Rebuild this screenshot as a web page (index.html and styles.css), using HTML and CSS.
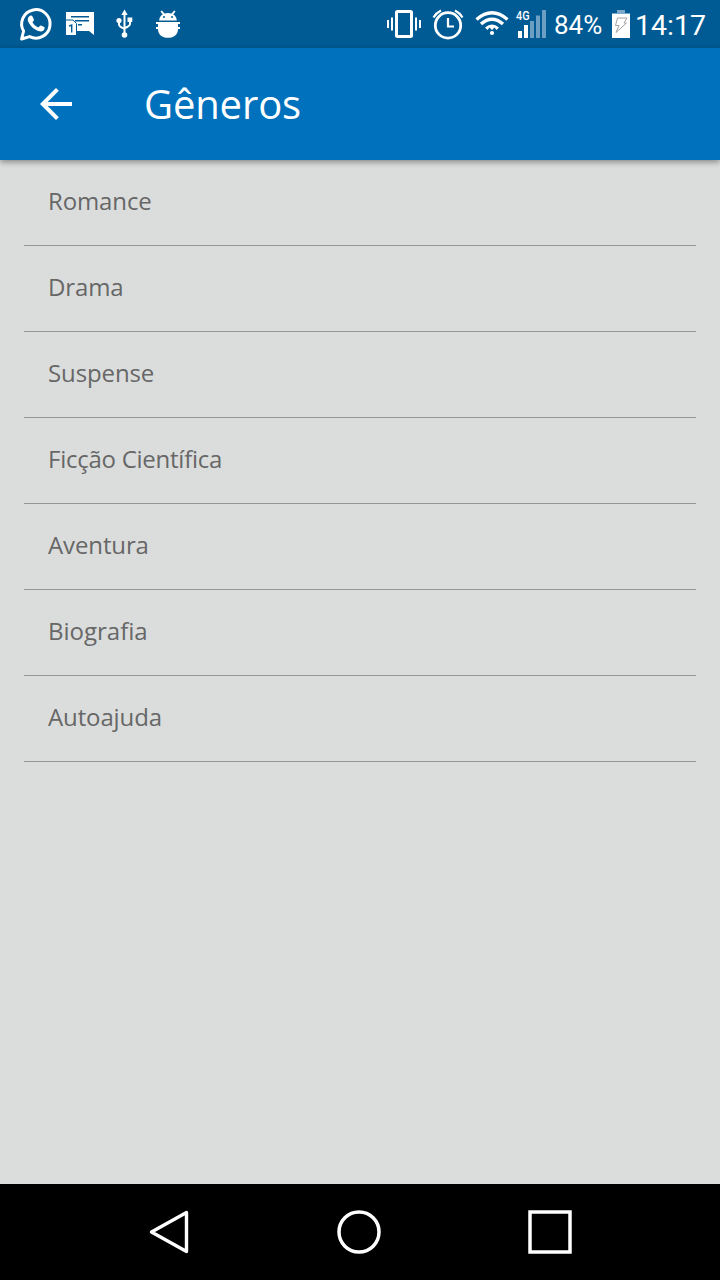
FILE: index.html
```html
<!DOCTYPE html>
<html lang="pt-BR">
<head>
    <meta charset="UTF-8">
    <meta name="viewport" content="width=device-width, initial-scale=1.0">
    <title>Gêneros</title>
    <link rel="stylesheet" href="styles.css">
</head>
<body>
    <div class="status-bar">
        <div class="notifications">
            <!-- whatsapp -->
            <svg class="icon" viewBox="0 0 44 48">
                <path d="M7.6 39 L9.6 31 A14.2 14.2 0 1 1 15.6 36.6 Z" fill="none" stroke="#fff" stroke-width="3" stroke-linejoin="round"/>
                <path d="M15.7 16 C16.8 15.3 18 15.4 18.5 16.4 L19.9 19.5 C20.2 20.5 19.1 21.5 18.5 22.2 C20 24.8 21.8 26.4 24.4 27.5 C25.2 26.8 26 25.2 27 25.5 L30.2 27.1 C31.2 27.7 30.4 30 29.2 30.8 C27.2 32 24.8 31.4 21.7 29.8 C18.2 28 15.8 24.8 14.2 21.8 C13.2 19.6 13.9 17.2 15.7 16 Z" fill="#fff"/>
            </svg>
            <!-- message -->
            <svg class="icon" viewBox="0 0 44 48">
                <path d="M8 12 H36 V35 L31 31 H19 V35 H8 Z" fill="#fff"/>
                <path d="M13 16.7 H31 M17 20.7 H31 M20 24.7 H24" stroke="#005b94" stroke-width="1.5"/>
                <path d="M8 20 H15 L18.5 23.5 V35" fill="none" stroke="#005b94" stroke-width="1"/>
                <path d="M11 26.2 L13.7 25 V32.5" fill="none" stroke="#005b94" stroke-width="1.4"/>
            </svg>
            <!-- usb -->
            <svg class="icon" viewBox="0 0 44 48">
                <path d="M22.5 14 V35 M17 21 V24.5 Q17 26.5 22.5 28.8 M28 20 V24 Q28 26 22.5 28.2" fill="none" stroke="#fff" stroke-width="2"/>
                <path d="M22.5 9.5 L25.7 15 H19.3 Z M25.5 17.5 H30.3 V22 H25.5 Z" fill="#fff"/>
                <circle cx="17" cy="20.6" r="2.6" fill="#fff"/>
                <circle cx="22.5" cy="35" r="2.8" fill="#fff"/>
            </svg>
            <!-- debug bug -->
            <svg class="icon" viewBox="0 0 44 48">
                <path d="M13.2 20.5 C13.2 16 17 13 22 13 S30.8 16 30.8 20.5 Z M12 22 H32 V29 C32 34.5 28 37.8 22 37.8 S12 34.5 12 29 Z" fill="#fff"/>
                <path d="M15.2 11 L18 14.5 M28.8 11 L26 14.5 M10 23 H34 M10 28 H34" stroke="#fff" stroke-width="2"/>
                <circle cx="18" cy="17" r="1" fill="#005b94"/>
                <circle cx="26" cy="17" r="1" fill="#005b94"/>
            </svg>
        </div>
        <div class="system">
            <!-- vibrate -->
            <svg class="icon" viewBox="0 0 44 48">
                <rect x="14.5" y="11.5" width="15" height="25" rx="1" fill="none" stroke="#fff" stroke-width="3"/>
                <path d="M6 20 V28 M10 17.5 V30.5 M34 17.5 V30.5 M38 20 V28" stroke="#fff" stroke-width="2"/>
            </svg>
            <!-- alarm -->
            <svg class="icon" viewBox="0 0 44 48">
                <circle cx="22" cy="25.4" r="12.7" fill="none" stroke="#fff" stroke-width="2.8"/>
                <path d="M22 18 V26.5 H28 M7.5 17.5 Q10 13 15 10.5 M36.5 17.5 Q34 13 29 10.5" fill="none" stroke="#fff" stroke-width="2.2"/>
            </svg>
            <!-- wifi -->
            <svg class="icon" viewBox="0 0 44 48">
                <path d="M6.5 19.5 Q22 6 37.5 19.5 M11 24 Q22 14.5 33 24" fill="none" stroke="#fff" stroke-width="3.4"/>
                <path d="M15 27.5 Q22 21.5 29 27.5 L26.5 30 L24.5 27.5 L22 30 L19.5 27.5 L17.5 30 Z" fill="#fff"/>
                <circle cx="22" cy="33" r="2.1" fill="#fff"/>
            </svg>
            <!-- signal -->
            <svg class="icon-signal" viewBox="0 0 36 48">
                <text class="network" x="2" y="20" textLength="13.5" lengthAdjust="spacingAndGlyphs">4G</text>
                <path d="M4 31 H8 V38 H4 Z M10 25 H14 V38 H10 Z" fill="#fff"/>
                <path d="M16 21 H20 V38 H16 Z M22 15.5 H26 V38 H22 Z M28 10 H32 V38 H28 Z" fill="#6d9fc3"/>
            </svg>
            <span class="percent">84%</span>
            <!-- battery -->
            <svg class="icon-battery" viewBox="0 0 18 48">
                <path d="M5 10 H13 V13 H18 V15 H0 V13 H5 Z" fill="#7baacb"/>
                <path d="M0 14 H18 V38 H0 Z" fill="#fff"/>
                <path d="M5.5 18 H15 L12 23 H14.5 L4 32.5 L7 25.5 H3.5 Z" fill="none" stroke="#a4a4a4" stroke-width="1"/>
            </svg>
            <span class="clock">14:17</span>
        </div>
    </div>

    <div class="toolbar">
        <svg class="back" viewBox="0 0 32 32">
            <path d="M32 16 H3.5 M17.4 1.4 L2.8 16 L17.4 30.6" fill="none" stroke="#fff" stroke-width="4"/>
        </svg>
        <h1 class="title">Gêneros</h1>
    </div>

    <ul class="genres">
        <li>Romance</li>
        <li>Drama</li>
        <li>Suspense</li>
        <li class="long">Ficção Científica</li>
        <li>Aventura</li>
        <li class="ligature">Biografia</li>
        <li>Autoajuda</li>
    </ul>

    <div class="nav-bar">
        <svg class="nav-icon" viewBox="0 0 48 48">
            <path d="M41.5 4.5 V43.5 L6.5 24 Z" fill="none" stroke="#fff" stroke-width="3.4" stroke-linejoin="round"/>
        </svg>
        <svg class="nav-icon" viewBox="0 0 48 48">
            <circle cx="23" cy="24" r="20" fill="none" stroke="#fff" stroke-width="3.5"/>
        </svg>
        <svg class="nav-icon" viewBox="0 0 48 48">
            <rect x="4" y="4" width="40" height="40" fill="none" stroke="#fff" stroke-width="3.5"/>
        </svg>
    </div>
</body>
</html>
```
FILE: styles.css
```css
* {
    box-sizing: border-box;
}
body {
    margin: 0;
    height: 100vh;
    display: flex;
    flex-direction: column;
    background-color: #dbdddc;
    font-family: "Open Sans", "Noto Sans", sans-serif;
    overflow: hidden;
}
.status-bar {
    display: flex;
    justify-content: space-between;
    height: 48px;
    padding: 0 15px 0 14px;
    background-color: #005b94;
    color: #fff;
    font-family: Roboto, sans-serif;
}
.notifications, .system {
    display: flex;
}
.icon {
    width: 44px;
    height: 48px;
}
.icon-signal {
    width: 36px;
    height: 48px;
}
.network {
    fill: #fff;
    font-size: 12px;
    font-weight: 500;
}
.percent {
    width: 58px;
    margin-left: 4px;
    font-size: 26px;
    line-height: 51px;
}
.icon-battery {
    width: 18px;
    height: 48px;
}
.clock {
    width: 70px;
    margin-left: 5px;
    font-size: 28.5px;
    line-height: 51px;
    white-space: nowrap;
}
.toolbar {
    display: flex;
    align-items: center;
    height: 112px;
    padding-left: 40px;
    background-color: #0071bc;
    box-shadow: 0 2px 6px rgba(0, 0, 0, 0.4);
}
.back {
    width: 32px;
    height: 32px;
}
.title {
    margin: 0 0 0 72px;
    color: #fff;
    font-size: 40px;
    font-weight: 400;
    letter-spacing: -0.15px;
    line-height: 56px;
}
.genres {
    flex: 1;
    margin: 0;
    padding: 0 24px;
    list-style: none;
}
.genres li {
    height: 86px;
    padding-left: 24px;
    border-bottom: 1px solid #949695;
    color: #676767;
    font-size: 24px;
    letter-spacing: -0.12px;
    line-height: 81px;
}
.genres .long {
    letter-spacing: -0.25px;
}
.genres .ligature {
    letter-spacing: normal;
}
.nav-bar {
    display: flex;
    justify-content: space-between;
    align-items: center;
    height: 96px;
    padding: 0 146px 0 145px;
    background-color: #000;
}
.nav-icon {
    width: 48px;
    height: 48px;
}
```
